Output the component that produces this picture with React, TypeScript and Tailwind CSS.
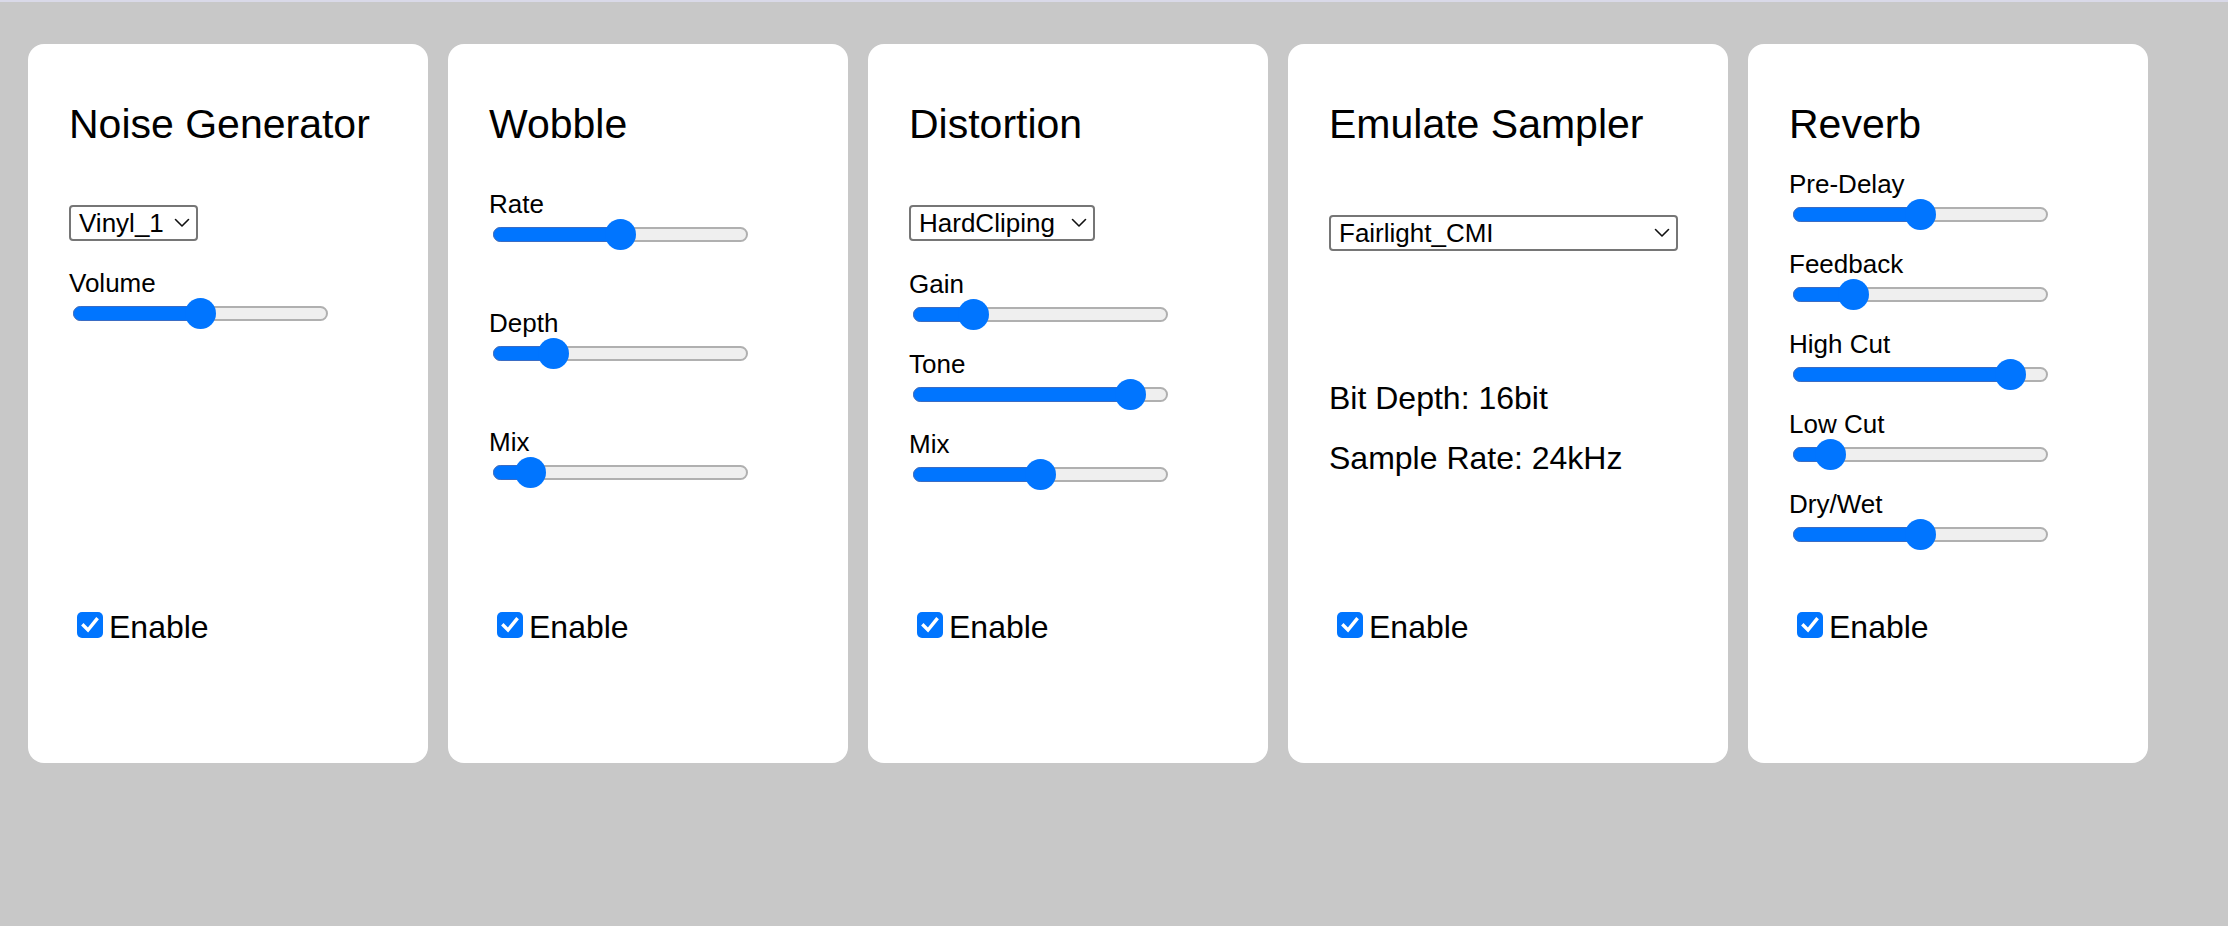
import React from "react";

const Chevron: React.FC = () => (
    <svg width="16" height="10" viewBox="0 0 16 10" fill="none" className="shrink-0">
        <path d="M1.5 1.5 L8 8 L14.5 1.5" stroke="#111" strokeWidth="1.6" strokeLinecap="round" strokeLinejoin="round" />
    </svg>
);

const Select: React.FC<{ value: string; width: string; className?: string }> = ({ value, width, className = "" }) => (
    <div
        className={`${width} ${className} h-[36px] flex items-center justify-between border-2 border-[#767676] rounded-[4px] pl-[8px] pr-[6px] text-[26px] leading-none text-black bg-white`}
    >
        <span>{value}</span>
        <Chevron />
    </div>
);

// value is 0..1, thumb travels inside the 255px track
const Slider: React.FC<{ value: number }> = ({ value }) => {
    const thumbW = 31;
    const left = value * (255 - thumbW);
    return (
        <div className="relative ml-[4px] w-[255px] h-[32px] flex items-center">
            <div className="absolute inset-x-0 h-[15px] rounded-full bg-[#efefef] border-2 border-[#b0b0b0]"></div>
            <div
                className="absolute left-0 h-[15px] rounded-full bg-[#0075ff] border-[1.5px] border-[#3a6cc4]"
                style={{ width: left + thumbW / 2 + 2 }}
            ></div>
            <div className="absolute w-[31px] h-[31px] rounded-full bg-[#0075ff]" style={{ left }}></div>
        </div>
    );
};

const Label: React.FC<{ text: string; className?: string }> = ({ text, className = "" }) => (
    <div className={`text-[26px] leading-[28px] text-black ${className}`}>{text}</div>
);

const Enable: React.FC = () => (
    <div className="mt-auto flex items-start">
        <div className="ml-[8px] mr-[6px] mt-[3px] w-[26px] h-[26px] rounded-[5px] bg-[#0075ff] flex items-center justify-center">
            <svg width="18" height="16" viewBox="0 0 18 16" fill="none">
                <path d="M2.5 8.5 L7 13 L15.5 2.5" stroke="white" strokeWidth="3.4" strokeLinecap="square" />
            </svg>
        </div>
        <span className="text-[32px] leading-[37px] text-black">Enable</span>
    </div>
);

const Card: React.FC<{ width?: string; children: React.ReactNode }> = ({ width = "w-[400px]", children }) => (
    <div className={`${width} h-[719px] shrink-0 flex flex-col bg-white rounded-2xl pt-[57px] pl-[41px] pr-[40px] pb-[117px]`}>
        {children}
    </div>
);

const Title: React.FC<{ text: string }> = ({ text }) => (
    <h2 className="text-[41px] leading-[46px] font-normal text-black">{text}</h2>
);

export default function App() {
    return (
        <div className="min-h-screen bg-[#c8c8c8] border-t-2 border-[#d9d9e8] font-['Liberation_Sans',Arial,sans-serif]">
            <div className="flex gap-[20px] pl-[28px] pt-[42px]">
                <Card>
                    <Title text="Noise Generator" />
                    <Select value="Vinyl_1" width="w-[129px]" className="mt-[58px]" />
                    <Label text="Volume" className="mt-[28px]" />
                    <Slider value={0.5} />
                    <Enable />
                </Card>

                <Card>
                    <Title text="Wobble" />
                    <Label text="Rate" className="mt-[43px]" />
                    <Slider value={0.5} />
                    <Label text="Depth" className="mt-[59px]" />
                    <Slider value={0.2} />
                    <Label text="Mix" className="mt-[59px]" />
                    <Slider value={0.1} />
                    <Enable />
                </Card>

                <Card>
                    <Title text="Distortion" />
                    <Select value="HardCliping" width="w-[186px]" className="mt-[58px]" />
                    <Label text="Gain" className="mt-[29px]" />
                    <Slider value={0.2} />
                    <Label text="Tone" className="mt-[20px]" />
                    <Slider value={0.9} />
                    <Label text="Mix" className="mt-[20px]" />
                    <Slider value={0.5} />
                    <Enable />
                </Card>

                <Card width="w-[440px]">
                    <Title text="Emulate Sampler" />
                    <Select value="Fairlight_CMI" width="w-[349px]" className="mt-[68px]" />
                    <p className="mt-[129px] text-[32px] leading-[37px] text-black">Bit Depth: 16bit</p>
                    <p className="mt-[23px] text-[32px] leading-[37px] text-black">Sample Rate: 24kHz</p>
                    <Enable />
                </Card>

                <Card>
                    <Title text="Reverb" />
                    <Label text="Pre-Delay" className="mt-[23px]" />
                    <Slider value={0.5} />
                    <Label text="Feedback" className="mt-[20px]" />
                    <Slider value={0.2} />
                    <Label text="High Cut" className="mt-[20px]" />
                    <Slider value={0.9} />
                    <Label text="Low Cut" className="mt-[20px]" />
                    <Slider value={0.1} />
                    <Label text="Dry/Wet" className="mt-[20px]" />
                    <Slider value={0.5} />
                    <Enable />
                </Card>
            </div>
        </div>
    );
}
